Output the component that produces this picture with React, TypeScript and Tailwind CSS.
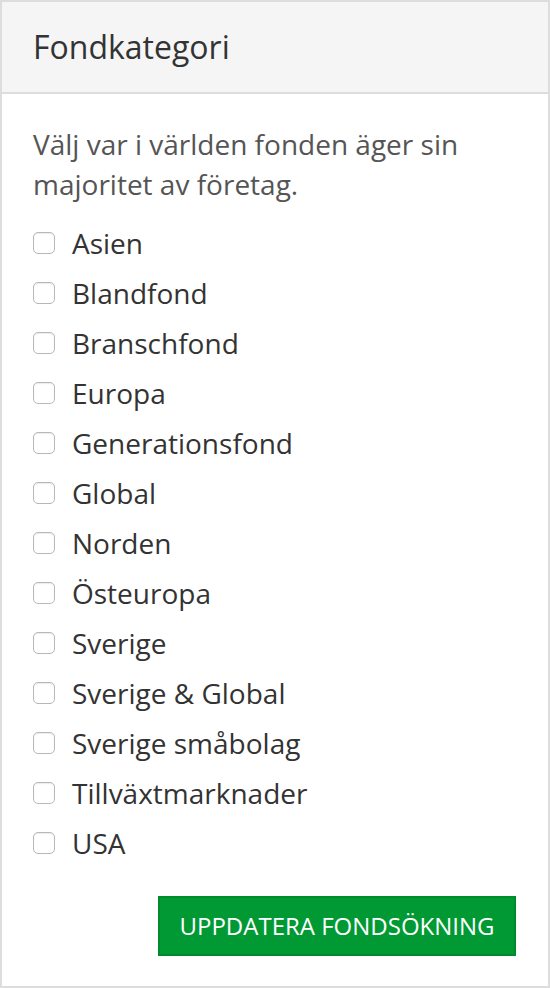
import React from "react";

const items = [
  "Asien",
  "Blandfond",
  "Branschfond",
  "Europa",
  "Generationsfond",
  "Global",
  "Norden",
  "Östeuropa",
  "Sverige",
  "Sverige & Global",
  "Sverige småbolag",
  "Tillväxtmarknader",
  "USA",
];

export default function App() {
  return (
    <div
      className="w-[550px] h-[988px] bg-white"
      style={{ fontFamily: '"Open Sans", "Noto Sans", sans-serif' }}
    >
      <div className="h-full border-2 border-[#dddddd] flex flex-col">
        <div className="h-[92px] shrink-0 bg-[#f5f5f5] border-b-2 border-[#dddddd] flex items-center px-[31px]">
          <span className="text-[32px] leading-none text-[#333333]">Fondkategori</span>
        </div>
        <div className="flex-1 px-[31px] pt-[30px] flex flex-col">
          <p className="text-[28px] leading-[40px] text-[#555555]">
            Välj var i världen fonden äger sin majoritet av företag.
          </p>
          <div className="mt-[14px] flex flex-col">
            {items.map((it) => (
              <label key={it} className="h-[50px] flex items-center">
                <span className="w-[22px] h-[22px] rounded-[5px] border border-[#b8b8b8] bg-white shadow-[inset_0_1px_1px_rgba(0,0,0,0.08)] shrink-0" />
                <span className="ml-[17px] text-[28px] leading-none text-[#333333]">{it}</span>
              </label>
            ))}
          </div>
          <div className="flex justify-end mt-[28px] pr-[1px]">
            <button className="w-[358px] h-[60px] bg-[#009933] border-2 border-[#008a2e] text-white text-[24px] leading-none uppercase flex items-center justify-center">
              Uppdatera fondsökning
            </button>
          </div>
        </div>
      </div>
    </div>
  );
}
